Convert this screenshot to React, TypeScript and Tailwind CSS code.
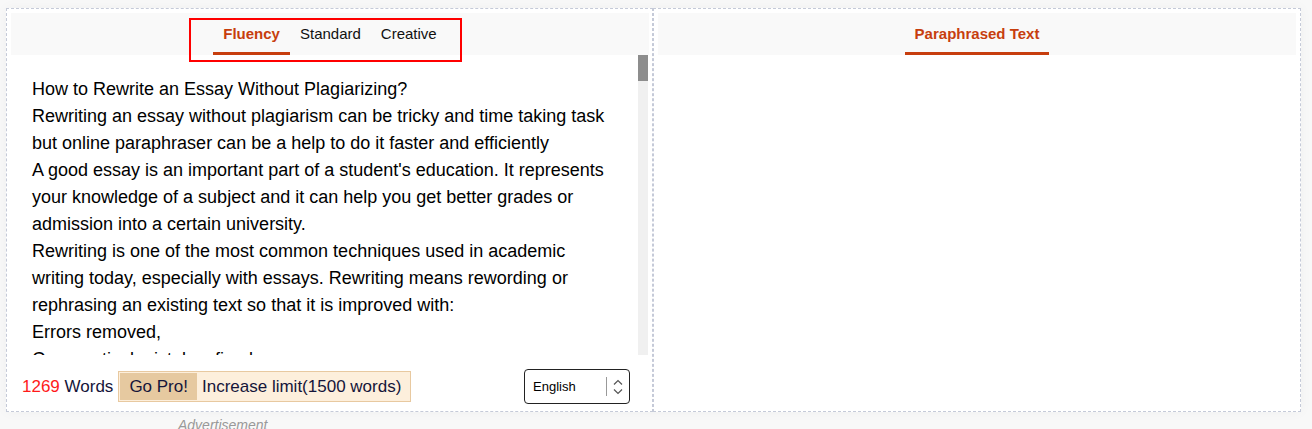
import React from "react";

const lines: string[] = [
  "How to Rewrite an Essay Without Plagiarizing?",
  "Rewriting an essay without plagiarism can be tricky and time taking task",
  "but online paraphraser can be a help to do it faster and efficiently",
  "A good essay is an important part of a student's education. It represents",
  "your knowledge of a subject and it can help you get better grades or",
  "admission into a certain university.",
  "Rewriting is one of the most common techniques used in academic",
  "writing today, especially with essays. Rewriting means rewording or",
  "rephrasing an existing text so that it is improved with:",
  "Errors removed,",
  "Grammatical mistakes fixed",
  "Sentence structure improved",
];

const ORANGE = "#c73e0e";

export default function App() {
  return (
    <div
      className="min-h-screen w-full bg-[#f8f8f8] pt-[8px] pl-[6px]"
      style={{ fontFamily: '"Liberation Sans", Arial, sans-serif' }}
    >
      <div className="flex w-[1295px] bg-white shadow-[0_0_12px_rgba(0,0,0,0.04)]">
        {/* Left panel */}
        <div className="flex h-[404px] w-[647px] flex-col border border-dashed border-[#c5cad8] p-[4px] pr-[3px]">
          <div className="flex h-[42px] shrink-0 justify-center bg-[#f9f9f9]">
            <div className="relative flex h-full">
              <div className="pointer-events-none absolute top-[5px] bottom-[-7px] left-[-24px] right-[-15px] border-2 border-[#ff0000]" />
              <div
                className="flex h-full items-center px-[10px] text-[15px] font-bold"
                style={{ color: ORANGE, boxShadow: `inset 0 -3px 0 ${ORANGE}` }}
              >
                Fluency
              </div>
              <div className="flex h-full items-center px-[10px] text-[15px] text-[#111]">
                Standard
              </div>
              <div className="flex h-full items-center px-[10px] text-[15px] text-[#111]">
                Creative
              </div>
            </div>
          </div>

          <div className="flex h-[300px] shrink-0 overflow-hidden">
            <div className="h-full w-[627px] overflow-hidden px-[21px] pt-[21px] text-[18px] leading-[27px] text-black">
              {lines.map((l, i) => (
                <div key={i} className="whitespace-nowrap">
                  {l}
                </div>
              ))}
            </div>
            <div className="flex h-full w-[10px] flex-col bg-[#f0f0f0]">
              <div className="h-[26px] w-full bg-[#8d8d8d]" />
            </div>
          </div>

          <div className="flex items-center pl-[11px] pr-[19px] pt-[14px]">
            <div className="whitespace-nowrap text-[17px] text-[#15153a]">
              <span className="text-[#ff1a1a]">1269</span> Words
            </div>
            <div className="ml-[5px] flex h-[31px] items-stretch border border-[#e8c9a0] bg-[#fdefdc] p-[1px] text-[17px] text-[#15153a]">
              <div className="flex items-center whitespace-nowrap bg-[#e6c9a0] px-[9px]">Go Pro!</div>
              <div className="flex items-center whitespace-nowrap pl-[5px] pr-[8px]">Increase limit(1500 words)</div>
            </div>
            <div className="ml-auto flex h-[35px] w-[106px] items-center rounded-[4px] border border-[#222] pl-[8px] pr-[5px] text-[13px] text-black">
              <span className="flex-1">English</span>
              <div className="h-[19px] w-px bg-[#999]" />
              <svg width="12" height="18" viewBox="0 0 12 18" className="ml-[5px]" fill="none" stroke="#555" strokeWidth="1.2">
                <path d="M2 6.5 L6 2.5 L10 6.5" />
                <path d="M2 11.5 L6 15.5 L10 11.5" />
              </svg>
            </div>
          </div>
        </div>

        {/* Right panel */}
        <div className="flex h-[404px] w-[648px] flex-col border border-dashed border-[#c5cad8] p-[4px]">
          <div className="flex h-[42px] shrink-0 justify-center bg-[#f9f9f9]">
            <div
              className="flex h-full items-center px-[10px] text-[15px] font-bold"
              style={{ color: ORANGE, boxShadow: `inset 0 -3px 0 ${ORANGE}` }}
            >
              Paraphrased Text
            </div>
          </div>
          <div className="flex-1 bg-white" />
        </div>
      </div>

      <div className="ml-[172px] mt-[3px] text-[14px] italic text-[#999]">Advertisement</div>
    </div>
  );
}
